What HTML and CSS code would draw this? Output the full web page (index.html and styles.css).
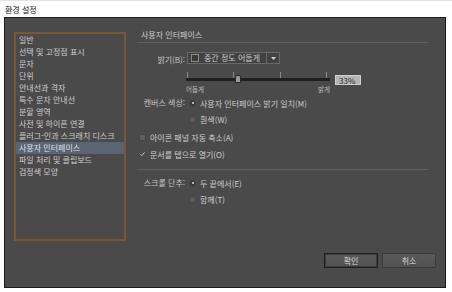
FILE: index.html
```html
<!DOCTYPE html>
<html lang="ko">

<head>
    <meta charset="UTF-8">
    <meta name="viewport" content="width=device-width, initial-scale=1.0">
    <title>환경 설정</title>
    <link rel="stylesheet" href="styles.css">
</head>

<body>
    <div class="titlebar">환경 설정</div>
    <div class="dialog">
        <div class="content">
            <ul class="nav">
                <li>일반</li>
                <li>선택 및 고정점 표시</li>
                <li>문자</li>
                <li>단위</li>
                <li>안내선과 격자</li>
                <li>특수 문자 안내선</li>
                <li>분할 영역</li>
                <li>사전 및 하이픈 연결</li>
                <li>플러그-인과 스크래치 디스크</li>
                <li class="active">사용자 인터페이스</li>
                <li>파일 처리 및 클립보드</li>
                <li>검정색 모양</li>
            </ul>
            <div class="pane">
                <div class="pane-title">사용자 인터페이스</div>

                <div class="field brightness">
                    <span class="label">밝기(B):</span>
                    <div class="select">
                        <span class="swatch"></span>
                        <span class="select-text">중간 정도 어둡게</span>
                        <span class="select-arrow">
                            <svg width="5" height="3" viewBox="0 0 5 3"><path d="M0 0h5L2.5 3z" fill="#cfcfcf"/></svg>
                        </span>
                    </div>
                </div>

                <div class="slider-row">
                    <div class="slider">
                        <div class="ticks"><i></i><i></i><i></i><i></i></div>
                        <div class="track"><span class="thumb" style="left: 33%"></span></div>
                        <div class="slider-labels"><span>어둡게</span><span>밝게</span></div>
                    </div>
                    <div class="value">33%</div>
                </div>

                <div class="field canvas">
                    <span class="label">캔버스 색상:</span>
                    <div class="options">
                        <div class="option"><span class="radio checked"></span>사용자 인터페이스 밝기 일치(M)</div>
                        <div class="option"><span class="radio"></span>흰색(W)</div>
                    </div>
                </div>

                <div class="check first"><span class="box"></span>아이콘 패널 자동 축소(A)</div>
                <div class="check">
                    <span class="box checked">
                        <svg width="7" height="6" viewBox="0 0 7 6"><path d="M0.6 3.2 2.6 5.2 6.4 0.6" fill="none" stroke="#d6d6d6" stroke-width="1.1"/></svg>
                    </span>문서를 탭으로 열기(O)
                </div>

                <div class="separator"></div>

                <div class="field scroll">
                    <span class="label">스크롤 단추:</span>
                    <div class="options">
                        <div class="option"><span class="radio checked"></span>두 끝에서(E)</div>
                        <div class="option"><span class="radio"></span>함께(T)</div>
                    </div>
                </div>
            </div>
        </div>
        <div class="footer">
            <button class="btn default">확인</button>
            <button class="btn">취소</button>
        </div>
    </div>
</body>

</html>
```

FILE: styles.css
```css
body {
    margin: 0;
    padding: 0;
    background-color: #fff;
    font-family: "Noto Sans CJK KR", "Noto Sans", sans-serif;
    font-size: 8px;
}

.titlebar {
    height: 17px;
    box-sizing: border-box;
    padding-left: 5px;
    line-height: 18px;
    color: #111;
    background-color: #fff;
    border-top: 1px solid #e4e4e4;
}

.dialog {
    width: 442px;
    height: 271px;
    margin-left: 4px;
    box-sizing: border-box;
    display: flex;
    flex-direction: column;
    background-color: #4a4a4a;
    border: 1px solid #1c1c1c;
    color: #cdcdcd;
}

.content {
    display: flex;
    gap: 11px;
    padding: 0 17px 0 9px;
}

/* Left category list */

.nav {
    list-style: none;
    margin: 14px 0 0 0;
    padding: 0;
    width: 112px;
    height: 209px;
    box-sizing: border-box;
    border: 2px solid #7b5632;
}

.nav li {
    height: 12px;
    line-height: 12px;
    padding-left: 3px;
    white-space: nowrap;
}

.nav li.active {
    background-color: #5b6473;
    color: #dde2ea;
}

/* Right pane */

.pane {
    flex: 1;
    padding-top: 11px;
}

.pane-title {
    line-height: 12px;
    padding: 0 0 1px 4px;
    border-bottom: 1px solid #5f5f5f;
}

.field {
    display: grid;
    grid-template-columns: 48px 1fr;
    column-gap: 4px;
}

.label {
    text-align: right;
    color: #c4c4c4;
    white-space: nowrap;
}

.brightness {
    margin-top: 9px;
    height: 12px;
    line-height: 12px;
}

.select {
    width: 93px;
    height: 12px;
    margin-left: -2px;
    box-sizing: border-box;
    display: flex;
    align-items: center;
    background-color: #424242;
    border: 1px solid #686868;
}

.swatch {
    width: 6px;
    height: 6px;
    margin: 0 5px 0 3px;
    border: 1px solid #8a8a8a;
    background-color: #3a3a3a;
}

.select-text {
    flex: 1;
    line-height: 10px;
}

.select-arrow {
    width: 12px;
    height: 100%;
    display: flex;
    align-items: center;
    justify-content: center;
    border-left: 1px solid #686868;
}

/* Brightness slider */

.slider-row {
    display: flex;
    margin-top: 8px;
    padding-left: 49px;
}

.slider {
    width: 144px;
    position: relative;
}

.ticks {
    height: 6px;
    display: flex;
    justify-content: space-between;
    padding: 0 3px 0 1px;
}

.ticks i {
    width: 1px;
    height: 6px;
    background-color: #8a8a8a;
}

.track {
    height: 3px;
    background-color: #1f1f1f;
    position: relative;
}

.thumb {
    position: absolute;
    top: -3px;
    width: 4px;
    height: 6px;
    margin-left: 1px;
    background-color: #9a9a9a;
    border: 1px solid #2a2a2a;
    border-radius: 2px 2px 0 0;
}

.slider-labels {
    margin-top: 3px;
    display: flex;
    justify-content: space-between;
    font-size: 6.5px;
    line-height: 10px;
    color: #bdbdbd;
}

.value {
    width: 26px;
    height: 10px;
    margin: 3px 0 0 5px;
    box-sizing: border-box;
    padding-left: 3px;
    line-height: 9px;
    background-color: #b4b4b4;
    border: 1px solid #cfcfcf;
    color: #2e2e2e;
}

/* Radios and checkboxes */

.canvas {
    margin-top: 1px;
}

.option,
.check {
    height: 16px;
    display: flex;
    align-items: center;
    white-space: nowrap;
}

.field .label {
    line-height: 16px;
}

.radio {
    width: 5px;
    height: 5px;
    margin-right: 4px;
    border-radius: 50%;
    background-color: #5c5c5c;
    border: 1px solid #444;
    position: relative;
}

.radio.checked {
    background-color: #393939;
}

.radio.checked::after {
    content: '';
    position: absolute;
    top: 1.5px;
    left: 1.5px;
    width: 2px;
    height: 2px;
    border-radius: 50%;
    background-color: #dcdcdc;
}

.check {
    padding-left: 2px;
    margin-top: 1px;
}

.check.first {
    margin-top: 2px;
}

.box {
    width: 5px;
    height: 5px;
    margin-right: 4px;
    background-color: #5e5e5e;
    border: 1px solid #444;
    display: flex;
    align-items: center;
    justify-content: center;
}

.box.checked {
    background: none;
    border-color: transparent;
}

.separator {
    margin-top: 7px;
    border-top: 1px solid #5f5f5f;
}

.scroll {
    margin-top: 5px;
}

/* Buttons */

.footer {
    margin-top: auto;
    display: flex;
    justify-content: flex-end;
    gap: 4px;
    padding: 0 9px 19px 0;
}

.btn {
    width: 54px;
    height: 15px;
    padding: 0;
    font-family: inherit;
    font-size: 8px;
    color: #d8d8d8;
    background: linear-gradient(to bottom, #5a5a5a, #525252);
    border: 1px solid #3a3a3a;
}

.btn.default {
    border-color: #1e1e1e;
    box-shadow: inset 0 0 0 1px #3c3c3c;
}
```
